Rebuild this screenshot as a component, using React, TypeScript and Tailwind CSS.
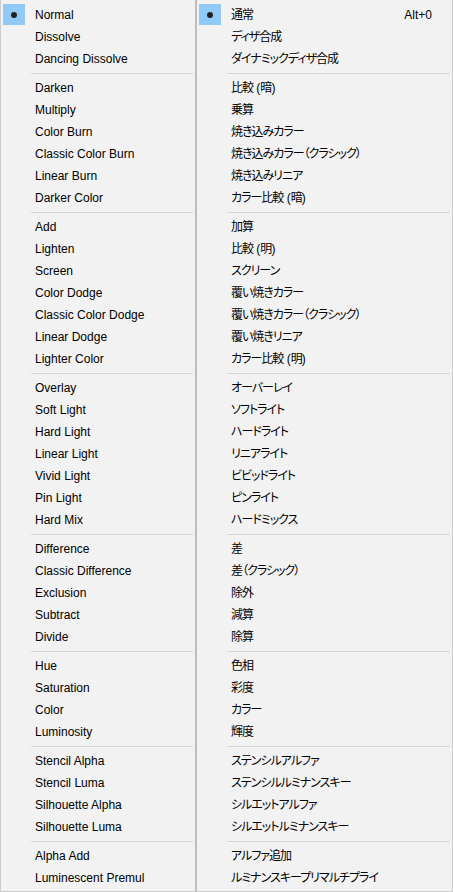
const leftGroups: string[][] = [
  ['Normal', 'Dissolve', 'Dancing Dissolve'],
  ['Darken', 'Multiply', 'Color Burn', 'Classic Color Burn', 'Linear Burn', 'Darker Color'],
  ['Add', 'Lighten', 'Screen', 'Color Dodge', 'Classic Color Dodge', 'Linear Dodge', 'Lighter Color'],
  ['Overlay', 'Soft Light', 'Hard Light', 'Linear Light', 'Vivid Light', 'Pin Light', 'Hard Mix'],
  ['Difference', 'Classic Difference', 'Exclusion', 'Subtract', 'Divide'],
  ['Hue', 'Saturation', 'Color', 'Luminosity'],
  ['Stencil Alpha', 'Stencil Luma', 'Silhouette Alpha', 'Silhouette Luma'],
  ['Alpha Add', 'Luminescent Premul'],
];

const rightGroups: string[][] = [
  ['通常', 'ディザ合成', 'ダイナミックディザ合成'],
  ['比較 (暗)', '乗算', '焼き込みカラー', '焼き込みカラー（クラシック）', '焼き込みリニア', 'カラー比較 (暗)'],
  ['加算', '比較 (明)', 'スクリーン', '覆い焼きカラー', '覆い焼きカラー（クラシック）', '覆い焼きリニア', 'カラー比較 (明)'],
  ['オーバーレイ', 'ソフトライト', 'ハードライト', 'リニアライト', 'ビビッドライト', 'ピンライト', 'ハードミックス'],
  ['差', '差（クラシック）', '除外', '減算', '除算'],
  ['色相', '彩度', 'カラー', '輝度'],
  ['ステンシルアルファ', 'ステンシルルミナンスキー', 'シルエットアルファ', 'シルエットルミナンスキー'],
  ['アルファ追加', 'ルミナンスキープリマルチプライ'],
];

// ascii space and parens keep their normal spacing, only kana/kanji get tightened
function Label({ text }: { text: string }) {
  return (
    <>
      {text.split(/([ ()])/).map((part, i) =>
        /^[ ()]$/.test(part) ? (
          <span key={i} className="tracking-normal">{part}</span>
        ) : (
          <span key={i}>{part}</span>
        )
      )}
    </>
  );
}

function Item({ label, checked, shortcut, labelClass }: { label: string; checked?: boolean; shortcut?: string; labelClass?: string }) {
  return (
    <div className="relative flex h-[22px] items-center pl-[34px] pr-5">
      {checked && (
        <div className="absolute left-[2px] top-0 flex h-[21px] w-[22px] items-center justify-center bg-[#91c9f7]">
          <div className="h-[6px] w-[6px] rounded-full bg-[#222]" />
        </div>
      )}
      <span className={`flex-1 whitespace-nowrap ${labelClass ?? ''}`}>
        <Label text={label} />
      </span>
      {shortcut && <span className="whitespace-nowrap">{shortcut}</span>}
    </div>
  );
}

function Menu({ groups, className, shortcut, labelClass }: { groups: string[][]; className: string; shortcut?: string; labelClass?: string }) {
  return (
    <div className={`flex h-[892px] flex-col bg-[#f2f2f2] pt-[4px] ${className}`}>
      {groups.map((g, gi) => (
        <div key={gi}>
          {gi > 0 && (
            <div className="flex h-[7px] items-center pl-[30px] pr-[2px]">
              <div className="h-px w-full bg-[#d7d7d7]" />
            </div>
          )}
          {g.map((label, i) => (
            <Item
              key={label}
              label={label}
              labelClass={labelClass}
              checked={gi === 0 && i === 0}
              shortcut={gi === 0 && i === 0 ? shortcut : undefined}
            />
          ))}
        </div>
      ))}
    </div>
  );
}

export default function App() {
  return (
    <div
      className="flex h-[892px] w-[453px] overflow-hidden bg-[#f2f2f2] text-[12px] text-[#000] [font-feature-settings:'palt']"
      style={{ fontFamily: '"Liberation Sans", "Noto Sans CJK JP", sans-serif' }}
    >
      <Menu
        groups={leftGroups}
        className="w-[197px] border-b border-l border-r-2 border-b-[#cccccc] border-l-[#cccccc] border-r-[#bdbdbd]"
      />
      <Menu
        groups={rightGroups}
        shortcut="Alt+0"
        labelClass="tracking-[-1px]"
        className="w-[256px] border-b border-r border-[#cccccc]"
      />
    </div>
  );
}
